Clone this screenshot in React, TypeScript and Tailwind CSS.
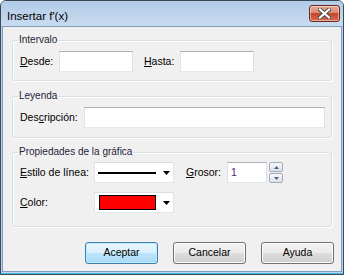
import React from 'react';

const TextBox: React.FC<{ className?: string; children?: React.ReactNode }> = ({ className = '', children }) => (
    <div className={`flex h-[21px] items-center border border-[#abadb3] border-b-[#e3e9ef] border-l-[#e2e3ea] border-r-[#dbdfe6] bg-white pl-[3px] ${className}`}>
        {children}
    </div>
);

const Combo: React.FC<{ children: React.ReactNode }> = ({ children }) => (
    <div className="flex h-[21px] w-[80px] items-center border border-[#e3e5ea] border-t-[#dadde3] bg-white pl-[2px] pr-[3px]">
        <div className="flex flex-1 items-center">{children}</div>
        <svg width="7" height="4" viewBox="0 0 7 4">
            <path d="M0 0h7L3.5 4z" fill="#000" />
        </svg>
    </div>
);

const SpinBtn: React.FC<{ up?: boolean }> = ({ up }) => (
    <div className="flex h-[10px] w-[14px] items-center justify-center rounded-[2px] border border-[#a3abb7] bg-gradient-to-b from-[#f5f7fa] to-[#dde3eb]">
        <svg width="5" height="3" viewBox="0 0 5 3">
            <path d={up ? 'M2.5 0L5 3H0z' : 'M0 0h5L2.5 3z'} fill="#4a6289" />
        </svg>
    </div>
);

const Group: React.FC<{ title: string; className?: string; children: React.ReactNode }> = ({ title, className = '', children }) => (
    <fieldset className={`rounded-[3px] border border-[#d5dfe5] pl-[6px] pr-[6px] shadow-[inset_1px_1px_0_#fff,1px_1px_0_#fff] ${className}`}>
        <legend className="-ml-[1px] px-[1px] text-[10px] leading-[12px] text-[#1b2233]">{title}</legend>
        {children}
    </fieldset>
);

const Btn: React.FC<{ label: string; primary?: boolean }> = ({ label, primary }) => (
    <button
        className={`h-[22px] w-[73px] rounded-[3px] border text-[10.5px] text-black ${
            primary
                ? 'border-[#3c7fb1] bg-[linear-gradient(#eaf6fd,#d9f0fc_50%,#bee6fd_50%,#a7d9f5)] shadow-[inset_0_0_0_1px_#bfe9fc]'
                : 'border-[#707070] bg-[linear-gradient(#f2f2f2,#ebebeb_50%,#dddddd_50%,#cfcfcf)] shadow-[inset_0_0_0_1px_#fcfcfc]'
        }`}
    >
        {label}
    </button>
);

export default function App() {
    return (
        <div className="h-[275px] w-[344px] bg-white [font-family:'Liberation_Sans',Arial,sans-serif]">
            <div className="flex h-[275px] w-[344px] flex-col overflow-hidden rounded-t-[6px] border border-[#3a4757] bg-[#bdd4ec] shadow-[inset_0_-1px_0_#41bdec]">
                {/* title bar */}
                <div className="flex h-[25px] items-start justify-between bg-gradient-to-b from-[#b1cbe7] to-[#c9dcf0] pl-[6px] pr-[3px]">
                    <span className="mt-[8px] text-[11.5px] leading-[14px] text-black">Insertar f'(x)</span>
                    <div className="mt-[4px] flex h-[17px] w-[31px] items-center justify-center rounded-[3px] border border-[#6b2a20] bg-[linear-gradient(#eaa898,#d98a76_45%,#c5472c_50%,#d8694f)] shadow-[inset_0_0_0_1px_rgba(255,255,255,0.45)]">
                        <svg width="13" height="11" viewBox="0 0 13 11">
                            <path d="M2 1.5L11 9.5M11 1.5L2 9.5" stroke="#4a4a4a" strokeWidth="4" strokeLinecap="square" />
                            <path d="M2 1.5L11 9.5M11 1.5L2 9.5" stroke="#fff" strokeWidth="2.2" strokeLinecap="square" />
                        </svg>
                    </div>
                </div>

                {/* client area */}
                <div className="mx-[1px] mb-[2px] flex flex-1 flex-col border border-[#7f9dc0] bg-[#f0f0f0] px-[9px] pt-[7px] text-[10.5px] text-black">
                    <Group title="Intervalo" className="pb-[8px] pt-[5px]">
                        <div className="flex items-center pl-[1px]">
                            <span className="w-[39px]"><u>D</u>esde:</span>
                            <TextBox className="w-[74px]" />
                            <span className="ml-[11px] w-[36px]"><u>H</u>asta:</span>
                            <TextBox className="w-[74px]" />
                        </div>
                    </Group>

                    <Group title="Leyenda" className="mt-[9px] pb-[9px] pt-[5px]">
                        <div className="flex items-center pl-[1px]">
                            <span className="w-[64px]">Des<u>c</u>ripción:</span>
                            <TextBox className="flex-1" />
                        </div>
                    </Group>

                    <Group title="Propiedades de la gráfica" className="mt-[8px] pb-[13px] pt-[4px]">
                        <div className="flex flex-col gap-[9px] pl-[1px]">
                            <div className="flex items-center">
                                <span className="w-[74px]"><u>E</u>stilo de línea:</span>
                                <Combo>
                                    <div className="ml-[1px] h-[2px] w-[58px] bg-black" />
                                </Combo>
                                <span className="ml-[12px] w-[41px]"><u>G</u>rosor:</span>
                                <TextBox className="w-[40px] text-[#5b1670]">1</TextBox>
                                <div className="ml-[2px] flex flex-col gap-[1px]">
                                    <SpinBtn up />
                                    <SpinBtn />
                                </div>
                            </div>
                            <div className="flex items-center">
                                <span className="w-[74px]"><u>C</u>olor:</span>
                                <Combo>
                                    <div className="ml-[2px] h-[15px] w-[57px] border border-black bg-[#ff0000]" />
                                </Combo>
                            </div>
                        </div>
                    </Group>

                    <div className="-mr-[2px] mt-[15px] flex justify-end gap-[15px]">
                        <Btn label="Aceptar" primary />
                        <Btn label="Cancelar" />
                        <Btn label="Ayuda" />
                    </div>
                </div>
            </div>
        </div>
    );
}
